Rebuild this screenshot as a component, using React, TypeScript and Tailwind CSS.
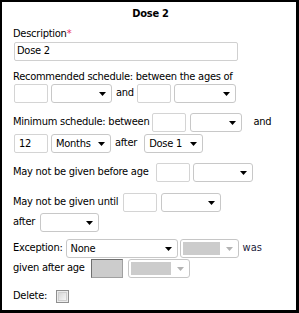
import React from 'react';

function Box({ w = 'w-[34px]', value = '', disabled = false, className = '' }: { w?: string; value?: string; disabled?: boolean; className?: string }) {
  if (disabled) {
    return (
      <div className={`${w} ${className} h-[19px] shrink-0 bg-[#cccccc] border border-[#a0a0a0] border-t-[#6f6f6f] border-l-[#6f6f6f]`} />
    );
  }
  return (
    <div className={`${w} ${className} h-[19px] shrink-0 bg-white border border-[#d4d4d4] rounded-[2px] flex items-center pl-[4px] leading-none`}>
      {value}
    </div>
  );
}

function Select({
  w = 'w-[60px]',
  value = '',
  disabled = false,
  inner = 'w-[37px]',
  className = '',
}: {
  w?: string;
  value?: string;
  disabled?: boolean;
  inner?: string;
  className?: string;
}) {
  return (
    <div
      className={`${w} ${className} h-[19px] shrink-0 bg-white border rounded-[3px] flex items-center justify-between pr-[4px] leading-none ${
        disabled ? 'border-[#c6c6c6] pl-[2px]' : 'border-[#c8c8c8] pl-[4px]'
      }`}
    >
      {disabled ? <div className={`${inner} h-[13px] bg-[#cccccc]`} /> : <span>{value}</span>}
      <svg width="7" height="4" viewBox="0 0 7 4" className="shrink-0 mr-[1px]">
        <path d="M0 0h7L3.5 4z" fill={disabled ? '#b3b3b3' : '#000'} />
      </svg>
    </div>
  );
}

export default function App() {
  return (
    <div
      className="w-[299px] h-[313px] bg-white border-l-2 border-t-2 border-r-[3px] border-b-[3px] border-black text-black text-[11px] tracking-[-0.25px] overflow-hidden whitespace-nowrap font-stretch-condensed"
      style={{ fontFamily: '"DejaVu Sans Condensed", "DejaVu Sans", Tahoma, sans-serif' }}
    >
      <div className="pl-[11px] pr-2">
        <div className="h-[18px] mt-[3px] flex items-center justify-center font-bold">Dose 2</div>

        <div className="mt-[4px] leading-[14px]">
          Description<span className="text-[#e8336b]">*</span>
        </div>
        <div className="w-[224px] h-[19px] ml-[1px] mt-[1px] border border-[#d0d0d0] rounded-[2px] flex items-center pl-[2px]">
          Dose 2
        </div>

        <div className="mt-[9px] leading-[14px]">Recommended schedule: between the ages of</div>
        <div className="flex items-center h-[19px]">
          <Box className="ml-[1px]" />
          <Select w="w-[61px]" className="ml-[3px]" />
          <span className="ml-[4px]">and</span>
          <Box className="ml-[3px]" />
          <Select w="w-[62px]" className="ml-[3px]" />
        </div>

        <div className="flex items-center h-[19px] mt-[10px]">
          <span>Minimum schedule: between</span>
          <Box className="ml-[3px]" />
          <Select w="w-[52px]" className="ml-[4px]" />
          <span className="ml-[11px]">and</span>
        </div>
        <div className="flex items-center h-[19px] mt-[2px]">
          <Box className="ml-[1px]" value="12" />
          <Select w="w-[60px]" className="ml-[3px]" value="Months" />
          <span className="ml-[4px]">after</span>
          <Select w="w-[59px]" className="ml-[7px]" value="Dose 1" />
        </div>

        <div className="flex items-center h-[19px] mt-[10px]">
          <span>May not be given before age</span>
          <Box className="ml-[7px]" />
          <Select w="w-[60px]" className="ml-[3px]" />
        </div>

        <div className="flex items-center h-[19px] mt-[11px]">
          <span>May not be given until</span>
          <Box className="ml-[5px]" />
          <Select w="w-[60px]" className="ml-[4px]" />
        </div>
        <div className="flex items-center h-[19px] mt-[1px]">
          <span>after</span>
          <Select w="w-[59px]" className="ml-[5px]" />
        </div>

        <div className="flex items-center h-[19px] mt-[7px]">
          <span>Exception:</span>
          <Select w="w-[112px]" className="ml-[3px]" value="None" />
          <Select w="w-[59px]" className="ml-[2px]" disabled inner="w-[37px]" />
          <span className="ml-[4px] text-[#1c1c3c] tracking-normal">was</span>
        </div>
        <div className="flex items-center h-[19px] mt-[1px]">
          <span>given after age</span>
          <Box w="w-[32px]" className="ml-[6px]" disabled />
          <Select w="w-[62px]" className="ml-[5px]" disabled inner="w-[40px]" />
        </div>

        <div className="flex items-center h-[19px] mt-[9px]">
          <span>Delete:</span>
          <div className="ml-[9px] w-[13px] h-[13px] border border-[#8f8f8f] bg-[#ececec] p-[1px]">
            <div className="w-full h-full border border-[#cfcfcf] bg-gradient-to-br from-[#d8d8d8] to-[#f6f6f6]" />
          </div>
        </div>
      </div>
    </div>
  );
}
